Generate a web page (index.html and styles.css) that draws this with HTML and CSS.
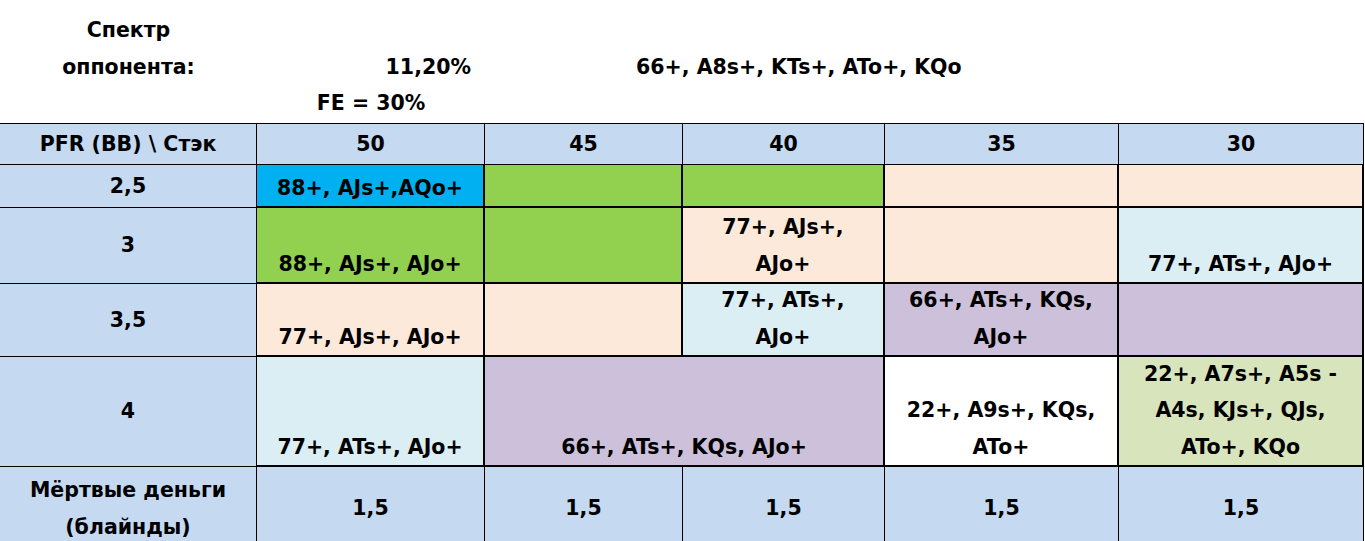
FILE: index.html
```html
<!DOCTYPE html>
<html lang="ru">
<head>
<meta charset="utf-8">
<title>Спектр оппонента</title>
<link rel="stylesheet" href="styles.css">
</head>
<body>
<div class="top">
  <div class="t-label">Спектр<br>оппонента:</div>
  <div class="t-pct">11,20%</div>
  <div class="t-range">66+, A8s+, KTs+, ATo+, KQo</div>
  <div class="t-fe">FE = 30%</div>
</div>
<div class="sheet">
  <div class="c hd first">PFR (BB) \ Стэк</div>
  <div class="c hd">50</div>
  <div class="c hd">45</div>
  <div class="c hd">40</div>
  <div class="c hd">35</div>
  <div class="c hd">30</div>

  <div class="c lb">2,5</div>
  <div class="c d cyan">88+, AJs+,AQo+</div>
  <div class="c d green"></div>
  <div class="c d green"></div>
  <div class="c d peach"></div>
  <div class="c d peach"></div>

  <div class="c lb">3</div>
  <div class="c d green">88+, AJs+, AJo+</div>
  <div class="c d green"></div>
  <div class="c d peach">77+, AJs+,<br>AJo+</div>
  <div class="c d peach"></div>
  <div class="c d ice">77+, ATs+, AJo+</div>

  <div class="c lb">3,5</div>
  <div class="c d peach">77+, AJs+, AJo+</div>
  <div class="c d peach"></div>
  <div class="c d ice">77+, ATs+,<br>AJo+</div>
  <div class="c d lav">66+, ATs+, KQs,<br>AJo+</div>
  <div class="c d lav"></div>

  <div class="c lb">4</div>
  <div class="c d ice last">77+, ATs+, AJo+</div>
  <div class="c d lav last span2">66+, ATs+, KQs, AJo+</div>
  <div class="c d white last">22+, A9s+, KQs,<br>ATo+</div>
  <div class="c d olive last">22+, A7s+, A5s -<br>A4s, KJs+, QJs,<br>ATo+, KQo</div>

  <div class="c lb">Мёртвые деньги<br>(блайнды)</div>
  <div class="c ft">1,5</div>
  <div class="c ft">1,5</div>
  <div class="c ft">1,5</div>
  <div class="c ft">1,5</div>
  <div class="c ft">1,5</div>
</div>
</body>
</html>
```
FILE: styles.css
```css
html, body {
  margin: 0;
  padding: 0;
  background: #ffffff;
  overflow: hidden;
}

body {
  font-family: "DejaVu Sans", "Noto Sans", sans-serif;
  font-weight: 700;
  font-size: 20.5px;
  line-height: 36.5px;
  color: #000000;
}

.top {
  box-sizing: border-box;
  height: 123px;
  padding-top: 12px;
  display: grid;
  grid-template-columns: 257px 228px 198px 202px 234px 245px;
  grid-template-rows: 36.5px 36.5px 36.5px;
}

.t-label {
  grid-column: 1;
  grid-row: 1 / span 2;
  text-align: center;
}

.t-pct {
  grid-column: 2;
  grid-row: 2;
  text-align: right;
  padding-right: 14px;
}

.t-range {
  grid-column: 3 / span 4;
  grid-row: 2;
  padding-left: 151px;
  white-space: nowrap;
}

.t-fe {
  grid-column: 2;
  grid-row: 3;
  text-align: center;
}

.sheet {
  display: grid;
  width: 1364px;
  grid-template-columns: 257px 228px 198px 202px 234px 245px;
  grid-template-rows: 42px 43px 76px 73px 110px 84px;
}

.c {
  box-sizing: border-box;
  display: flex;
  flex-direction: column;
  align-items: center;
  text-align: center;
  white-space: nowrap;
  overflow: hidden;
}

.hd {
  background: #c5d9f1;
  border-top: 1px solid #000;
  border-right: 1px solid #000;
  border-bottom: 1px solid #000;
  justify-content: center;
}

.lb {
  background: #c5d9f1;
  border-right: 1px solid #000;
  border-bottom: 1px solid #000;
  justify-content: center;
}

.d {
  border-right: 2px solid #000;
  border-bottom: 2px solid #000;
  justify-content: flex-end;
}

.ft {
  background: #c5d9f1;
  border-right: 1px solid #000;
  border-bottom: 1px solid #000;
  justify-content: center;
}

.span2 {
  grid-column: span 2;
}

.cyan { background: #00b0f0; }
.green { background: #92d050; }
.peach { background: #fde9d9; }
.ice { background: #daeef3; }
.lav { background: #ccc0da; }
.olive { background: #d8e4bc; }
.white { background: #ffffff; }
```
